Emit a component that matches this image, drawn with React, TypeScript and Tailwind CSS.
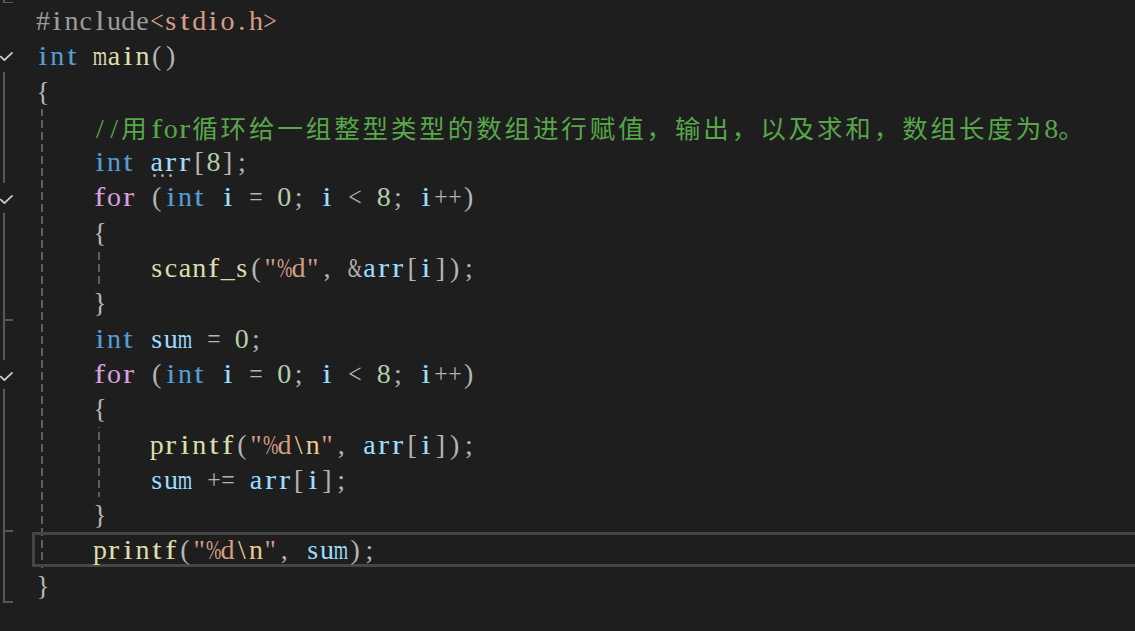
import React from "react";

type Tok = [string, string];

const K = "text-[#569cd6]";
const F = "text-[#dcdcaa]";
const V = "text-[#9cdcfe]";
const S = "text-[#d69d85]";
const N = "text-[#b5cea8]";
const P = "text-[#b4b4b4]";
const C = "text-[#57a64a]";
const CT = "text-[#d8a0df]";
const PR = "text-[#9b9b9b]";
const ES = "text-[#e8c98f]";
const CJK = "cjk";

type Gutter = "none" | "line" | "tick" | "check" | "checkNested";

interface Line {
  indent: number;
  guides: number;
  gutter: Gutter;
  toks: Tok[];
  current?: boolean;
  dots?: boolean;
}

const forToks: Tok[] = [
  ["for", CT],
  [" ", P],
  ["(", P],
  ["int", K],
  [" ", P],
  ["i", V],
  [" = ", P],
  ["0", N],
  ["; ", P],
  ["i", V],
  [" < ", P],
  ["8", N],
  ["; ", P],
  ["i", V],
  ["++", P],
  [")", P],
];

const lines: Line[] = [
  {
    indent: 0,
    guides: 0,
    gutter: "none",
    toks: [
      ["#include", PR],
      ["<stdio.h>", S],
    ],
  },
  {
    indent: 0,
    guides: 0,
    gutter: "check",
    toks: [
      ["int", K],
      [" ", P],
      ["main", F],
      ["()", P],
    ],
  },
  { indent: 0, guides: 0, gutter: "line", toks: [["{", P]] },
  {
    indent: 1,
    guides: 1,
    gutter: "line",
    toks: [
      ["//", C],
      ["用", CJK],
      ["for", C],
      ["循环给一组整型类型的数组进行赋值，输出，以及求和，数组长度为", CJK],
      ["8", C],
      ["。", CJK],
    ],
  },
  {
    indent: 1,
    guides: 1,
    gutter: "line",
    dots: true,
    toks: [
      ["int", K],
      [" ", P],
      ["arr", V],
      ["[", P],
      ["8", N],
      ["]", P],
      [";", P],
    ],
  },
  { indent: 1, guides: 1, gutter: "checkNested", toks: forToks },
  { indent: 1, guides: 1, gutter: "line", toks: [["{", P]] },
  {
    indent: 2,
    guides: 2,
    gutter: "line",
    toks: [
      ["scanf_s", F],
      ["(", P],
      ['"%d"', S],
      [", ", P],
      ["&", P],
      ["arr", V],
      ["[", P],
      ["i", V],
      ["]", P],
      [")", P],
      [";", P],
    ],
  },
  { indent: 1, guides: 1, gutter: "tick", toks: [["}", P]] },
  {
    indent: 1,
    guides: 1,
    gutter: "line",
    toks: [
      ["int", K],
      [" ", P],
      ["sum", V],
      [" = ", P],
      ["0", N],
      [";", P],
    ],
  },
  { indent: 1, guides: 1, gutter: "checkNested", toks: forToks },
  { indent: 1, guides: 1, gutter: "line", toks: [["{", P]] },
  {
    indent: 2,
    guides: 2,
    gutter: "line",
    toks: [
      ["printf", F],
      ["(", P],
      ['"%d', S],
      ["\\n", ES],
      ['"', S],
      [", ", P],
      ["arr", V],
      ["[", P],
      ["i", V],
      ["]", P],
      [")", P],
      [";", P],
    ],
  },
  {
    indent: 2,
    guides: 2,
    gutter: "line",
    toks: [
      ["sum", V],
      [" += ", P],
      ["arr", V],
      ["[", P],
      ["i", V],
      ["]", P],
      [";", P],
    ],
  },
  { indent: 1, guides: 1, gutter: "tick", toks: [["}", P]] },
  {
    indent: 1,
    guides: 1,
    gutter: "line",
    current: true,
    toks: [
      ["printf", F],
      ["(", P],
      ['"%d', S],
      ["\\n", ES],
      ['"', S],
      [", ", P],
      ["sum", V],
      [")", P],
      [";", P],
    ],
  },
  { indent: 0, guides: 0, gutter: "tick", toks: [["}", P]] },
];

function GutterCell({ kind }: { kind: Gutter }) {
  const bar = "bg-[#585858] w-[2px] ml-[3px]";
  if (kind === "none") return <div className="w-[32px] shrink-0" />;
  if (kind === "line")
    return (
      <div className="w-[32px] shrink-0 flex">
        <div className={`${bar} h-full`} />
      </div>
    );
  if (kind === "tick")
    return (
      <div className="w-[32px] shrink-0 flex flex-col">
        <div className={`${bar} flex-1`} />
        <div className="h-[2px] w-[10px] ml-[3px] bg-[#585858]" />
      </div>
    );
  const nested = kind === "checkNested";
  return (
    <div className="w-[32px] shrink-0 flex flex-col">
      <div className={`${bar} ${nested ? "h-[4px]" : "h-0"}`} />
      <div className="flex-1 flex items-center">
        <svg width="14" height="14" viewBox="0 0 14 14" className="mt-[4px]">
          <polyline
            points="0.8,6.6 4.4,10.2 12,2.8"
            fill="none"
            stroke="#cfcfcf"
            strokeWidth="1.7"
            strokeLinecap="round"
            strokeLinejoin="round"
          />
        </svg>
      </div>
      <div className={`${bar} h-[2px]`} />
    </div>
  );
}

function Guide() {
  return (
    <div className="w-[56.8px] shrink-0 h-full">
      <div className="ml-[5px] w-[2px] h-full bg-fixed bg-[repeating-linear-gradient(to_bottom,#5e5e5e_0px,#5e5e5e_8px,transparent_8px,transparent_12px)]" />
    </div>
  );
}

function scaleFor(ch: string): string {
  if ("m%&".includes(ch)) return "scale-x-[0.66]";
  if ("wMW@".includes(ch)) return "scale-x-[0.7]";
  if ("<>=+".includes(ch)) return "scale-x-[0.85]";
  if ("iltfrj".includes(ch)) return "scale-x-[1.2]";
  return "scale-x-100";
}

function Ch({ ch, c }: { ch: string; c: string }) {
  return (
    <span className={`inline-flex justify-center w-[14.2px] ${c}`}>
      <span className={`inline-block ${scaleFor(ch)}`}>{ch}</span>
    </span>
  );
}

function Code({ toks }: { toks: Tok[] }) {
  const out: React.ReactNode[] = [];
  toks.forEach(([t, c], i) => {
    if (c === CJK) {
      out.push(
        <span
          key={i}
          className="text-[#57a64a] font-['Noto_Sans_CJK_SC',sans-serif] text-[25.5px] tracking-[2.9px]"
        >
          {t}
        </span>
      );
    } else {
      Array.from(t).forEach((ch, j) => {
        out.push(<Ch key={`${i}-${j}`} ch={ch} c={c} />);
      });
    }
  });
  return <div className="whitespace-pre leading-[35.31px]">{out}</div>;
}

export default function App() {
  return (
    <div className="w-[1135px] h-[631px] bg-[#1e1e1e] overflow-hidden font-['Liberation_Serif','Noto_Sans_CJK_SC',serif] text-[28px]">
      {/* partial line above */}
      <div className="flex h-[3px]">
        <div className="w-[32px] shrink-0 flex flex-col">
          <div className="bg-[#585858] w-[2px] ml-[3px] flex-1" />
          <div className="h-[1.5px] w-[10px] ml-[3px] bg-[#585858]" />
        </div>
      </div>
      {lines.map((ln, idx) => {
        const guides = [];
        for (let g = 0; g < ln.indent; g++) {
          guides.push(
            g < ln.guides ? (
              <Guide key={g} />
            ) : (
              <div key={g} className="w-[56.8px] shrink-0" />
            )
          );
        }
        return (
          <div key={idx} className="flex h-[35.31px]">
            <GutterCell kind={ln.gutter} />
            <div className="relative flex flex-1 pl-[4px]">
              {ln.current && (
                <div className="absolute top-0 bottom-[1px] left-0 right-[-10px] border-[3px] border-[#464646]" />
              )}
              {guides}
              <Code toks={ln.toks} />
              {ln.dots && (
                <div className="absolute left-[121px] top-[30px] flex gap-[5px]">
                  <span className="w-[3px] h-[3px] rounded-full bg-[#a0a0a0]" />
                  <span className="w-[3px] h-[3px] rounded-full bg-[#a0a0a0]" />
                  <span className="w-[3px] h-[3px] rounded-full bg-[#a0a0a0]" />
                </div>
              )}
            </div>
          </div>
        );
      })}
    </div>
  );
}
